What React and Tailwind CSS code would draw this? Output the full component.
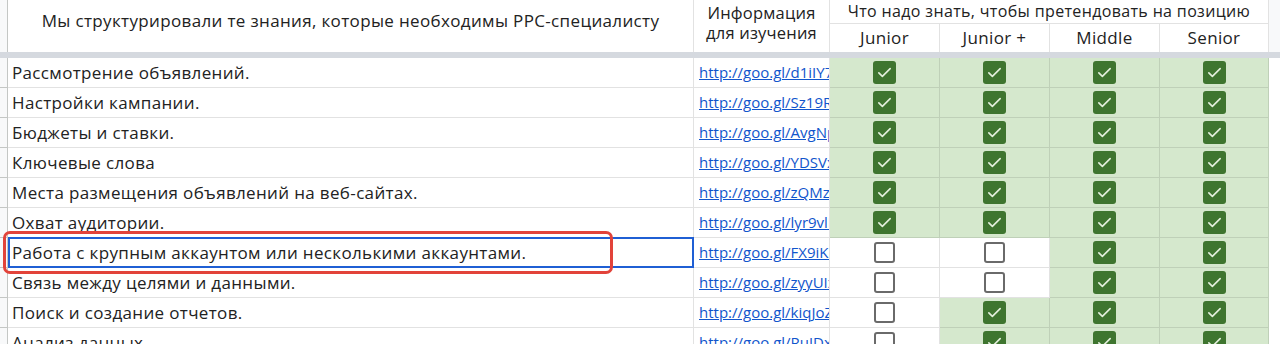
import React from 'react';

const rows = [
  { text: 'Рассмотрение объявлений.', link: 'http://goo.gl/d1iIY7xQ', marks: [1, 1, 1, 1] },
  { text: 'Настройки кампании.', link: 'http://goo.gl/Sz19Rk', marks: [1, 1, 1, 1] },
  { text: 'Бюджеты и ставки.', link: 'http://goo.gl/AvgNp', marks: [1, 1, 1, 1] },
  { text: 'Ключевые слова', link: 'http://goo.gl/YDSVx', marks: [1, 1, 1, 1] },
  { text: 'Места размещения объявлений на веб-сайтах.', link: 'http://goo.gl/zQMzq', marks: [1, 1, 1, 1] },
  { text: 'Охват аудитории.', link: 'http://goo.gl/lyr9vlK', marks: [1, 1, 1, 1] },
  { text: 'Работа с крупным аккаунтом или несколькими аккаунтами.', link: 'http://goo.gl/FX9iKe', marks: [0, 0, 1, 1], selected: true },
  { text: 'Связь между целями и данными.', link: 'http://goo.gl/zyyUIx', marks: [0, 0, 1, 1] },
  { text: 'Поиск и создание отчетов.', link: 'http://goo.gl/kiqJoZ', marks: [0, 1, 1, 1] },
  { text: 'Анализ данных.', link: 'http://goo.gl/RuJDx', marks: [0, 1, 1, 1] },
];

const levels = ['Junior', 'Junior +', 'Middle', 'Senior'];

const grid = 'grid grid-cols-[8px_686px_136px_110px_110px_110px_109px_1fr]';

function Checkbox({ checked }) {
  if (checked) {
    return (
      <div className="w-[23px] h-[23px] rounded-[3px] bg-[#3e752f] flex items-center justify-center">
        <svg width="17" height="17" viewBox="0 0 24 24" fill="none" stroke="#e3efdc" strokeWidth="2.3" strokeLinecap="round" strokeLinejoin="round">
          <path d="M4 12.5l5 5L20 6.5" />
        </svg>
      </div>
    );
  }
  return <div className="w-[21px] h-[21px] rounded-[3px] border-[2.5px] border-[#6a6a6a] bg-white" />;
}

export default function App() {
  return (
    <div className="relative h-[344px] overflow-hidden bg-white text-[#222] font-['Open_Sans',sans-serif] tracking-[0.35px]">
      {/* Header */}
      <div className={`${grid} grid-rows-[24px_28px]`}>
        <div className="row-span-2 bg-[#f8f9fa] border-r border-[#c4c7c5]" />
        <div className="row-span-2 border-r border-[#e2e2e2] text-center text-[17px] leading-[24px] pt-[9px] whitespace-nowrap">
          Мы структурировали те знания, которые необходимы PPC-специалисту
        </div>
        <div className="row-span-2 border-r border-[#e2e2e2] text-center text-[16.5px] leading-[20px] pt-[3px] tracking-[0.2px]">
          Информация
          <br />
          для изучения
        </div>
        <div className="col-span-4 border-b border-r border-[#e2e2e2] text-center text-[16px] leading-[23px] whitespace-nowrap">
          Что надо знать, чтобы претендовать на позицию
        </div>
        <div className="row-span-2 bg-[#f8f9fa]" />
        {levels.map((l) => (
          <div key={l} className="border-r border-[#e2e2e2] text-center text-[17px] leading-[27px]">
            {l}
          </div>
        ))}
      </div>

      {/* Frozen divider */}
      <div className="h-[6px] bg-[#d5d9df]" />

      {/* Rows */}
      {rows.map((r) => (
        <div key={r.text} className={`${grid} h-[30px]`}>
          <div className="bg-[#f8f9fa] border-r border-b border-[#c4c7c5]" />
          <div
            className={`flex items-center text-[17px] whitespace-nowrap overflow-hidden ${
              r.selected ? 'border-2 border-[#1f5fd4] -mt-[1px] pl-[2px]' : 'border-b border-r border-[#e2e2e2] pl-[4px]'
            }`}
          >
            {r.text}
          </div>
          <div className="border-b border-r border-[#e2e2e2] flex items-center pl-[5px] overflow-hidden whitespace-nowrap">
            <a href="#" className="text-[15px] tracking-normal text-[#1155cc] underline">
              {r.link}
            </a>
          </div>
          {r.marks.map((m, i) => (
            <div
              key={i}
              className={`border-b border-r flex items-center justify-center ${
                m ? 'bg-[#d5e8cd] border-[#bfd0b8]' : 'bg-white border-[#e2e2e2]'
              }`}
            >
              <Checkbox checked={m} />
            </div>
          ))}
          <div className="bg-white" />
        </div>
      ))}

      {/* Annotation */}
      <div className="absolute left-[3px] top-[231px] w-[610px] h-[43px] rounded-[7px] border-[3px] border-[#e2433a] pointer-events-none" />
    </div>
  );
}
